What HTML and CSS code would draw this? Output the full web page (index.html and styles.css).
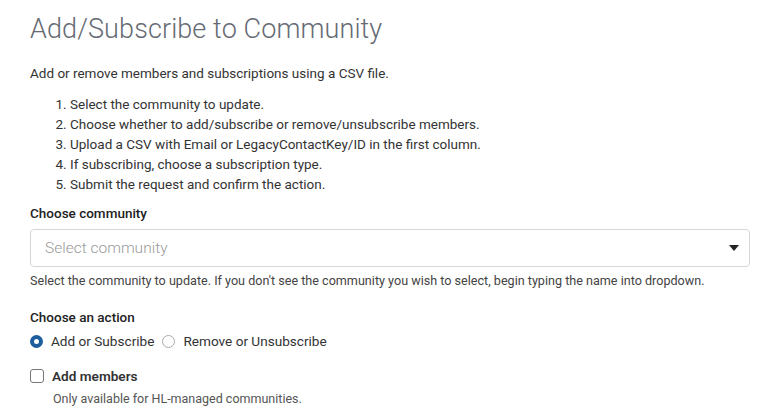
FILE: index.html
```html
<!DOCTYPE html>
<html>
<head>
<meta charset="utf-8">
<link rel="stylesheet" href="styles.css">
</head>
<body>
<div class="page">
  <h1 class="title">Add/Subscribe to Community</h1>
  <p class="intro">Add or remove members and subscriptions using a CSV file.</p>
  <ol class="steps">
    <li>Select the community to update.</li>
    <li>Choose whether to add/subscribe or remove/unsubscribe members.</li>
    <li>Upload a CSV with Email or LegacyContactKey/ID in the first column.</li>
    <li>If subscribing, choose a subscription type.</li>
    <li>Submit the request and confirm the action.</li>
  </ol>
  <div class="field">
    <div class="label">Choose community</div>
    <div class="select">
      <span class="placeholder">Select community</span>
      <svg class="caret" width="10" height="6" viewBox="0 0 10 6"><path d="M0 0h10L5 6z" fill="#222"/></svg>
    </div>
    <div class="help">Select the community to update. If you don't see the community you wish to select, begin typing the name into dropdown.</div>
  </div>
  <div class="field action">
    <div class="label">Choose an action</div>
    <div class="radios">
      <label class="radio"><span class="dot on"></span>Add or Subscribe</label>
      <label class="radio"><span class="dot"></span>Remove or Unsubscribe</label>
    </div>
  </div>
  <div class="check">
    <span class="box"></span><span class="check-label">Add members</span>
  </div>
  <div class="note">Only available for HL-managed communities.</div>
</div>
</body>
</html>
```
FILE: styles.css
```css
* { box-sizing: border-box; }
body { margin: 0; background: #fff; font-family: Roboto, "Noto Sans", sans-serif; color: #333; }
.page { padding: 12px 31px 0 30px; width: 781px; }
.title { margin: 0; font-size: 27px; font-weight: 300; color: #666b73; line-height: 34px; letter-spacing: 0.1px; }
.intro { margin: 18px 0 0; font-size: 13.5px; line-height: 18px; color: #333; }
.steps { margin: 12px 0 0; padding-left: 40px; font-size: 13.5px; line-height: 20px; color: #333; }
.field { margin-top: 10px; }
.label { font-size: 13.5px; font-weight: 500; line-height: 18px; color: #222; }
.select { margin-top: 7px; height: 38px; border: 1px solid #d6d6d6; border-radius: 4px; display: flex; align-items: center; justify-content: space-between; padding: 0 10px 0 14px; }
.placeholder { font-size: 15.5px; color: #9a9a9a; font-weight: 300; }
.help { margin-top: 6px; font-size: 12.6px; line-height: 16px; color: #444; }
.action { margin-top: 19px; }
.radios { display: flex; gap: 8px; margin-top: 6px; }
.radio { display: flex; align-items: center; gap: 8px; font-size: 13.6px; color: #333; line-height: 18px; }
.dot { width: 13px; height: 13px; border-radius: 50%; border: 1.5px solid #aaa; display: inline-block; }
.dot.on { border: 4px solid #1c5e9e; background: #fff; }
.check { display: flex; align-items: center; gap: 8px; margin-top: 17px; }
.box { width: 14px; height: 14px; border: 1.5px solid #777; border-radius: 3px; display: inline-block; }
.check-label { font-size: 13.6px; font-weight: 600; color: #333; line-height: 18px; }
.note { margin: 6px 0 0 23px; font-size: 12.5px; color: #555; line-height: 16px; }
```
